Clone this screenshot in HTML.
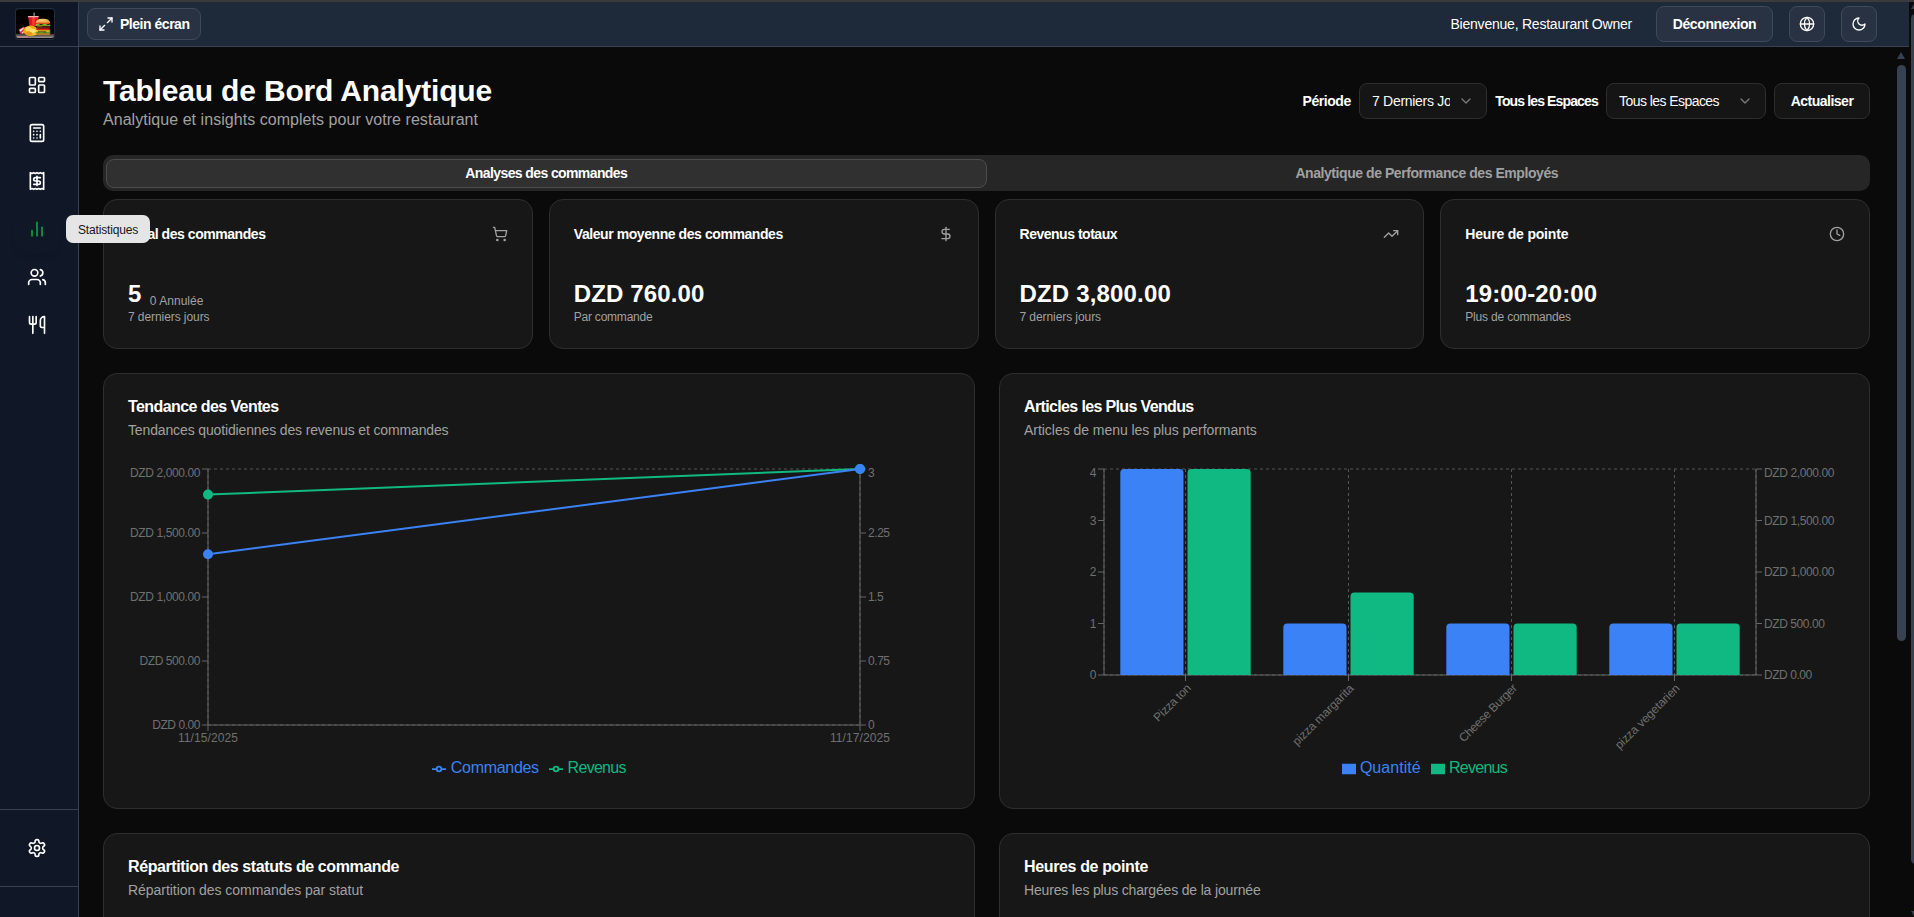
<!DOCTYPE html>
<html lang="fr"><head><meta charset="utf-8"><title>Tableau de Bord Analytique</title>
<style>
*{box-sizing:border-box}
html,body{margin:0;padding:0}
body{width:1914px;height:917px;overflow:hidden;background:#0a0a0a;color:#fafafa;
 font-family:"Liberation Sans",sans-serif;font-size:14px;position:relative}
span{white-space:pre}
.ico{display:block;flex:none}
#chrome{position:absolute;left:0;top:0;width:1914px;height:2px;background:#3b3a3d;z-index:9}
aside{position:absolute;left:0;top:2px;width:79px;height:915px;background:#101828;border-right:1px solid #364153}
aside .logo{position:absolute;left:0;top:0;width:78px;height:45px;border-bottom:1px solid #364153}
aside nav a{position:absolute;left:13px;width:48px;height:48px;display:flex;align-items:center;justify-content:center;border-radius:12px}
aside nav a.on{box-shadow:0 6px 6px -4px rgba(0,0,0,.16);border-radius:16px}
aside .foot{position:absolute;left:0;top:807px;width:78px;height:78px;border-top:1px solid #364153;border-bottom:1px solid #364153;
 display:flex;align-items:center;justify-content:center;padding-right:4px}
header{position:absolute;left:79px;top:2px;width:1830px;height:45px;background:#1e2939;border-bottom:1px solid #364153}
.hbtn{position:absolute;top:4px;height:36px;border:1px solid #404957;background:#283242;border-radius:8px;
 display:flex;align-items:center;justify-content:center;font-weight:700;color:#fff;font-size:14px;line-height:20px}
main{position:absolute;left:79px;top:47px;width:1830px;height:870px;overflow:hidden}
h1{position:absolute;left:24px;top:24px;margin:0;font-size:30px;line-height:36px;font-weight:700;color:#fff}
h1 span{position:relative;top:2px}
.sub{position:absolute;left:24px;top:60px;margin:0;font-size:16px;line-height:24px;color:#a1a1a1}
.sub span{position:relative;top:1px}
.ctl{position:absolute;top:36px;height:36px;display:flex;align-items:center;font-size:14px;line-height:20px}
.lbl{font-weight:700;color:#fff}
.sel,.btn{border:1px solid #2e2e2e;background:#151515;border-radius:8px;color:#fafafa}
.sel{padding:0 12px;justify-content:space-between}
.sel .v{overflow:hidden;display:block}
.btn{justify-content:center;font-weight:700;color:#fff}
.tabs{position:absolute;left:24px;top:108px;width:1767px;height:36px;background:#262626;border-radius:10px;padding:3px;display:flex;align-items:center}
.tab{flex:1;height:29px;display:flex;align-items:center;justify-content:center;font-size:14px;line-height:20px;font-weight:700;color:#a1a1a1;border:1px solid transparent;border-radius:8px}
.tab.on{background:#303030;border-color:#4c4c4c;color:#fff}
.card{position:absolute;background:#171717;border:1px solid #2e2e2e;border-radius:14px}
.stat .t{position:absolute;left:24px;top:24px;font-size:14px;line-height:20px;font-weight:700;color:#fff}
.stat .ico{position:absolute;right:24px;top:26px}
.stat .v{position:absolute;left:24px;top:76px;font-size:24px;line-height:32px;font-weight:700;color:#fff;display:flex;align-items:baseline}
.stat .v span{position:relative;top:2px}
.stat .v small{font-size:12px;font-weight:400;color:#a1a1a1;margin-left:9px}
.stat .v small span{top:5px}
.stat .d{position:absolute;left:24px;top:108px;font-size:12px;line-height:16px;color:#a1a1a1}
.stat .d span{position:relative;top:1px}
.ct{position:absolute;left:24px;top:24px;font-size:16px;line-height:16px;font-weight:700;color:#fff}
.ct span{position:relative;top:1px}
.cd{position:absolute;left:24px;top:46px;font-size:14px;line-height:20px;color:#a1a1a1}
.chart{position:absolute;left:24px;top:90px}
.chart text{font-family:"Liberation Sans",sans-serif}
.legend{position:absolute;top:381px;height:24px;display:flex;align-items:center;font-size:16px;line-height:24px}
.legend svg{margin-right:4px;position:relative;top:2px}
.legend span{position:relative;top:1px}
#tip{position:absolute;left:66px;top:215px;width:84px;height:28px;background:#e5e5e5;color:#171717;border-radius:7px;
 font-size:12px;line-height:16px;display:flex;align-items:center;justify-content:center;z-index:5}
#sb1{position:absolute;left:1894px;top:47px;width:15px;height:870px;background:#0a0a0a}
#sb2{position:absolute;left:1909px;top:2px;width:5px;height:915px;background:#0a0a0a}
.thumb{position:absolute;background:#384152;border-radius:5px}
.arr{position:absolute;width:0;height:0;border-left:4.5px solid transparent;border-right:4.5px solid transparent}
</style></head>
<body>
<div id="chrome"></div>
<aside>
<div class="logo"><svg width="40" height="32" viewBox="0 0 40 32" style="position:absolute;left:15px;top:6px">
<defs><linearGradient id="fl" x1="0" y1="0" x2="0" y2="1"><stop offset="0" stop-color="#3a2f2a"/><stop offset="1" stop-color="#a0958f"/></linearGradient>
<radialGradient id="bun" cx=".4" cy=".3" r=".8"><stop offset="0" stop-color="#f7d27c"/><stop offset="1" stop-color="#dd9428"/></radialGradient>
<clipPath id="lc"><rect x="1" y="2" width="38" height="28" rx="2.500"/></clipPath></defs>
<rect x=".5" y=".5" width="39" height="31" rx="3.500" fill="#000" stroke="#1f2b3e" stroke-width="1.3"/>
<g clip-path="url(#lc)">
<rect x="1" y="2" width="38" height="28" fill="#000"/>
<rect x="1" y="25.800" width="38" height="4.200" fill="url(#fl)"/>
<rect x="2" y="28" width="11" height="2" fill="#b98a93" opacity=".7"/>
<rect x="18.500" y="4.600" width="1.300" height="4" fill="#8a8a8a"/>
<path d="M13.200 8.800h10.200l-1.200 9.200h-7.800z" fill="#e0161f"/><path d="M17 9h3l-.6 8.800h-2z" fill="#f2402f"/>
<rect x="12.900" y="8.100" width="10.800" height="1.200" rx=".5" fill="#f1b9bc"/>
<path d="M3.600 21.500l5-3 2.300 1.200-1.500 6.500-4.300-.4z" fill="#d7283f"/><path d="M4.500 22l3.600-2.200.9.600-3.400 3.300zM6.500 25l2.800-3 .2 1.500-1.800 2z" fill="#f8e4e7"/>
<ellipse cx="15.800" cy="22.700" rx="7.300" ry="5.300" fill="#f0a91b"/>
<ellipse cx="13.500" cy="21" rx="3.200" ry="2.300" fill="#ffd85a"/><ellipse cx="18" cy="23" rx="3" ry="2.200" fill="#ffe178"/><ellipse cx="14" cy="25.500" rx="3.400" ry="1.700" fill="#e6941a"/><ellipse cx="19.500" cy="25.800" rx="2.400" ry="1.400" fill="#f7c437"/>
<path d="M20.600 15.300c0-3.300 3.200-4.600 7.300-4.600s7.300 1.300 7.300 4.600z" fill="url(#bun)"/>
<rect x="21.500" y="14.700" width="12.800" height="1.300" rx=".6" fill="#e4481d"/>
<path d="M20.600 16.300q1.800-1 3.600 0t3.700 0 3.700 0 3.700 0v1.700h-14.700z" fill="#84bd2e"/>
<rect x="21" y="17.700" width="14" height="2.900" rx="1.200" fill="#4e2410"/><rect x="22" y="18.300" width="5" height="1" rx=".5" fill="#8a5a1c"/>
<rect x="21.300" y="20.500" width="13.400" height="1.800" rx=".8" fill="#e3221a"/>
<path d="M20.800 22.200h14.400v1.400l-2.400.7-2-.7h-10z" fill="#f7d420"/>
<path d="M20.600 23.900q1.800.8 3.600 0t3.700 0 3.700 0 3.700 0v1.500h-14.700z" fill="#5b9a28"/>
<path d="M21 25.200h14v.6a1 1 0 0 1-1 1h-12a1 1 0 0 1-1-1z" fill="#d58b2b"/>
</g></svg></div>
<nav>
<a style="top:59px"><svg class="ico" width="20" height="20" viewBox="0 0 24 24" fill="none" stroke="#fff" stroke-width="2" stroke-linecap="round" stroke-linejoin="round" style=""><rect width="7" height="9" x="3" y="3" rx="1"/><rect width="7" height="5" x="14" y="3" rx="1"/><rect width="7" height="9" x="14" y="12" rx="1"/><rect width="7" height="5" x="3" y="16" rx="1"/></svg></a>
<a style="top:107px"><svg class="ico" width="20" height="20" viewBox="0 0 24 24" fill="none" stroke="#fff" stroke-width="2" stroke-linecap="round" stroke-linejoin="round" style=""><rect width="16" height="20" x="4" y="2" rx="2"/><line x1="8" x2="16" y1="6" y2="6"/><line x1="16" x2="16" y1="14" y2="18"/><path d="M16 10h.01"/><path d="M12 10h.01"/><path d="M8 10h.01"/><path d="M12 14h.01"/><path d="M8 14h.01"/><path d="M12 18h.01"/><path d="M8 18h.01"/></svg></a>
<a style="top:155px"><svg class="ico" width="20" height="20" viewBox="0 0 24 24" fill="none" stroke="#fff" stroke-width="2" stroke-linecap="round" stroke-linejoin="round" style=""><path d="M4 2v20l2-1 2 1 2-1 2 1 2-1 2 1 2-1 2 1V2l-2 1-2-1-2 1-2-1-2 1-2-1-2 1Z"/><path d="M16 8h-6a2 2 0 1 0 0 4h4a2 2 0 1 1 0 4H8"/><path d="M12 17.5v-11"/></svg></a>
<a class="on" style="top:203px"><svg class="ico" width="20" height="20" viewBox="0 0 24 24" fill="none" stroke="#00a63e" stroke-width="2" stroke-linecap="round" stroke-linejoin="round" style=""><line x1="18" x2="18" y1="20" y2="10"/><line x1="12" x2="12" y1="20" y2="4"/><line x1="6" x2="6" y1="20" y2="14"/></svg></a>
<a style="top:251px"><svg class="ico" width="20" height="20" viewBox="0 0 24 24" fill="none" stroke="#fff" stroke-width="2" stroke-linecap="round" stroke-linejoin="round" style=""><path d="M16 21v-2a4 4 0 0 0-4-4H6a4 4 0 0 0-4 4v2"/><circle cx="9" cy="7" r="4"/><path d="M22 21v-2a4 4 0 0 0-3-3.87"/><path d="M16 3.13a4 4 0 0 1 0 7.75"/></svg></a>
<a style="top:299px"><svg class="ico" width="20" height="20" viewBox="0 0 24 24" fill="none" stroke="#fff" stroke-width="2" stroke-linecap="round" stroke-linejoin="round" style=""><path d="M3 2v7c0 1.1.9 2 2 2h4a2 2 0 0 0 2-2V2"/><path d="M7 2v20"/><path d="M21 15V2a5 5 0 0 0-5 5v6c0 1.1.9 2 2 2h3Zm0 0v7"/></svg></a>
</nav>
<div class="foot"><svg class="ico" width="20" height="20" viewBox="0 0 24 24" fill="none" stroke="#fff" stroke-width="2" stroke-linecap="round" stroke-linejoin="round" style=""><path d="M12.22 2h-.44a2 2 0 0 0-2 2v.18a2 2 0 0 1-1 1.73l-.43.25a2 2 0 0 1-2 0l-.15-.08a2 2 0 0 0-2.73.73l-.22.38a2 2 0 0 0 .73 2.73l.15.1a2 2 0 0 1 1 1.72v.51a2 2 0 0 1-1 1.74l-.15.09a2 2 0 0 0-.73 2.73l.22.38a2 2 0 0 0 2.73.73l.15-.08a2 2 0 0 1 2 0l.43.25a2 2 0 0 1 1 1.73V20a2 2 0 0 0 2 2h.44a2 2 0 0 0 2-2v-.18a2 2 0 0 1 1-1.73l.43-.25a2 2 0 0 1 2 0l.15.08a2 2 0 0 0 2.73-.73l.22-.39a2 2 0 0 0-.73-2.73l-.15-.08a2 2 0 0 1-1-1.74v-.5a2 2 0 0 1 1-1.74l.15-.09a2 2 0 0 0 .73-2.73l-.22-.38a2 2 0 0 0-2.73-.73l-.15.08a2 2 0 0 1-2 0l-.43-.25a2 2 0 0 1-1-1.73V4a2 2 0 0 0-2-2z"/><circle cx="12" cy="12" r="3"/></svg></div>
</aside>
<header>
<div class="hbtn" style="left:8px;top:6px;height:32px;width:114px;justify-content:flex-start;padding-left:10px"><svg class="ico" width="16" height="16" viewBox="0 0 24 24" fill="none" stroke="#fff" stroke-width="2" stroke-linecap="round" stroke-linejoin="round" style="margin-right:6px"><polyline points="15 3 21 3 21 9"/><polyline points="9 21 3 21 3 15"/><line x1="21" x2="14" y1="3" y2="10"/><line x1="3" x2="10" y1="21" y2="14"/></svg><span style="letter-spacing:-0.473px;">Plein écran</span></div>
<div style="position:absolute;left:1371.5px;top:12px;font-size:14px;line-height:20px;color:#fff"><span style="letter-spacing:-0.225px;">Bienvenue, Restaurant Owner</span></div>
<div class="hbtn" style="left:1577px;width:117px"><span style="letter-spacing:-0.401px;">Déconnexion</span></div>
<div class="hbtn" style="left:1710px;width:36px"><svg class="ico" width="16" height="16" viewBox="0 0 24 24" fill="none" stroke="#fff" stroke-width="2" stroke-linecap="round" stroke-linejoin="round" style=""><circle cx="12" cy="12" r="10"/><path d="M12 2a14.5 14.5 0 0 0 0 20 14.5 14.5 0 0 0 0-20"/><path d="M2 12h20"/></svg></div>
<div class="hbtn" style="left:1762px;width:36px"><svg class="ico" width="16" height="16" viewBox="0 0 24 24" fill="none" stroke="#fff" stroke-width="2" stroke-linecap="round" stroke-linejoin="round" style=""><path d="M12 3a6 6 0 0 0 9 9 9 9 0 1 1-9-9Z"/></svg></div>
</header>
<main>
<h1><span style="letter-spacing:-0.169px;">Tableau de Bord Analytique</span></h1>
<p class="sub"><span style="letter-spacing:0.045px;">Analytique et insights complets pour votre restaurant</span></p>
<div class="ctl lbl" style="left:1223.5px"><span style="letter-spacing:-0.437px;">Période</span></div>
<div class="ctl sel" style="left:1280px;width:128px"><span class="v" style="width:78px"><span style="letter-spacing:-0.294px;">7 Derniers Jours</span></span><svg class="ico" width="16" height="16" viewBox="0 0 24 24" fill="none" stroke="#7a7a7a" stroke-width="2" stroke-linecap="round" stroke-linejoin="round" style=""><path d="m6 9 6 6 6-6"/></svg></div>
<div class="ctl lbl" style="left:1416.3px"><span style="letter-spacing:-0.873px;">Tous les Espaces</span></div>
<div class="ctl sel" style="left:1527px;width:160px"><span style="letter-spacing:-0.560px;">Tous les Espaces</span><svg class="ico" width="16" height="16" viewBox="0 0 24 24" fill="none" stroke="#7a7a7a" stroke-width="2" stroke-linecap="round" stroke-linejoin="round" style=""><path d="m6 9 6 6 6-6"/></svg></div>
<div class="ctl btn" style="left:1695px;width:96px"><span style="letter-spacing:-0.500px;">Actualiser</span></div>
<div class="tabs"><div class="tab on"><span style="letter-spacing:-0.604px;">Analyses des commandes</span></div><div class="tab"><span style="letter-spacing:-0.438px;">Analytique de Performance des Employés</span></div></div>
<section class="card stat" style="left:24px;top:152px;width:429.75px;height:150px">
<div class="t"><span style="letter-spacing:-0.448px;">Total des commandes</span></div><svg class="ico" width="16" height="16" viewBox="0 0 24 24" fill="none" stroke="#a1a1a1" stroke-width="2" stroke-linecap="round" stroke-linejoin="round" style=""><circle cx="8" cy="21" r="1"/><circle cx="19" cy="21" r="1"/><path d="M2.05 2.05h2l2.66 12.42a2 2 0 0 0 2 1.58h9.78a2 2 0 0 0 1.95-1.57l1.65-7.43H5.12"/></svg>
<div class="v"><span style="letter-spacing:-0.559px;">5</span><small><span style="letter-spacing:0.034px;">0 Annulée</span></small></div>
<div class="d"><span style="letter-spacing:-0.076px;">7 derniers jours</span></div></section><section class="card stat" style="left:469.75px;top:152px;width:429.75px;height:150px">
<div class="t"><span style="letter-spacing:-0.428px;">Valeur moyenne des commandes</span></div><svg class="ico" width="16" height="16" viewBox="0 0 24 24" fill="none" stroke="#a1a1a1" stroke-width="2" stroke-linecap="round" stroke-linejoin="round" style=""><line x1="12" x2="12" y1="2" y2="22"/><path d="M17 5H9.5a3.5 3.5 0 0 0 0 7h5a3.5 3.5 0 0 1 0 7H6"/></svg>
<div class="v"><span style="letter-spacing:0.129px;">DZD 760.00</span></div>
<div class="d"><span style="letter-spacing:-0.223px;">Par commande</span></div></section><section class="card stat" style="left:915.5px;top:152px;width:429.75px;height:150px">
<div class="t"><span style="letter-spacing:-0.482px;">Revenus totaux</span></div><svg class="ico" width="16" height="16" viewBox="0 0 24 24" fill="none" stroke="#a1a1a1" stroke-width="2" stroke-linecap="round" stroke-linejoin="round" style=""><polyline points="22 7 13.5 15.5 8.5 10.5 2 17"/><polyline points="16 7 22 7 22 13"/></svg>
<div class="v"><span style="letter-spacing:0.173px;">DZD 3,800.00</span></div>
<div class="d"><span style="letter-spacing:-0.076px;">7 derniers jours</span></div></section><section class="card stat" style="left:1361.25px;top:152px;width:429.75px;height:150px">
<div class="t"><span style="letter-spacing:-0.186px;">Heure de pointe</span></div><svg class="ico" width="16" height="16" viewBox="0 0 24 24" fill="none" stroke="#a1a1a1" stroke-width="2" stroke-linecap="round" stroke-linejoin="round" style=""><circle cx="12" cy="12" r="10"/><polyline points="12 6 12 12 16 14"/></svg>
<div class="v"><span style="letter-spacing:0.112px;">19:00-20:00</span></div>
<div class="d"><span style="letter-spacing:-0.184px;">Plus de commandes</span></div></section>
<section class="card" style="left:24px;top:326px;width:872px;height:436px">
<div class="ct"><span style="letter-spacing:-0.581px;">Tendance des Ventes</span></div>
<div class="cd"><span style="letter-spacing:-0.136px;">Tendances quotidiennes des revenus et commandes</span></div>
<svg class="chart" width="822" height="320" viewBox="0 0 822 320"><line x1="80" y1="5" x2="80" y2="261" stroke="#555" stroke-dasharray="3 3"/><line x1="732" y1="5" x2="732" y2="261" stroke="#555" stroke-dasharray="3 3"/><line x1="80" y1="5" x2="732" y2="5" stroke="#555" stroke-dasharray="3 3"/><line x1="80" y1="261" x2="732" y2="261" stroke="#555" stroke-dasharray="3 3"/><line x1="80" y1="261" x2="732" y2="261" stroke="#666"/><line x1="80" y1="5" x2="80" y2="261" stroke="#666"/><line x1="732" y1="5" x2="732" y2="261" stroke="#666"/><line x1="80" y1="261" x2="80" y2="267" stroke="#666"/><line x1="732" y1="261" x2="732" y2="267" stroke="#666"/><line x1="74" y1="5" x2="80" y2="5" stroke="#666"/><line x1="732" y1="5" x2="738" y2="5" stroke="#666"/><line x1="74" y1="69" x2="80" y2="69" stroke="#666"/><line x1="732" y1="69" x2="738" y2="69" stroke="#666"/><line x1="74" y1="133" x2="80" y2="133" stroke="#666"/><line x1="732" y1="133" x2="738" y2="133" stroke="#666"/><line x1="74" y1="197" x2="80" y2="197" stroke="#666"/><line x1="732" y1="197" x2="738" y2="197" stroke="#666"/><line x1="74" y1="261" x2="80" y2="261" stroke="#666"/><line x1="732" y1="261" x2="738" y2="261" stroke="#666"/><text x="72" y="12.8" text-anchor="end" font-size="12" fill="#707070" style="letter-spacing:-0.393px" >DZD 2,000.00</text><text x="740" y="12.8" text-anchor="start" font-size="12" fill="#707070" style="letter-spacing:-0.487px" >3</text><text x="72" y="73" text-anchor="end" font-size="12" fill="#707070" style="letter-spacing:-0.393px" >DZD 1,500.00</text><text x="740" y="73" text-anchor="start" font-size="12" fill="#707070" style="letter-spacing:-0.440px" >2.25</text><text x="72" y="137" text-anchor="end" font-size="12" fill="#707070" style="letter-spacing:-0.393px" >DZD 1,000.00</text><text x="740" y="137" text-anchor="start" font-size="12" fill="#707070" style="letter-spacing:-0.562px" >1.5</text><text x="72" y="201" text-anchor="end" font-size="12" fill="#707070" style="letter-spacing:-0.420px" >DZD 500.00</text><text x="740" y="201" text-anchor="start" font-size="12" fill="#707070" style="letter-spacing:-0.440px" >0.75</text><text x="72" y="265" text-anchor="end" font-size="12" fill="#707070" style="letter-spacing:-0.445px" >DZD 0.00</text><text x="740" y="265" text-anchor="start" font-size="12" fill="#707070" style="letter-spacing:-0.487px" >0</text><text x="80" y="277.5" text-anchor="middle" font-size="12" fill="#707070" style="letter-spacing:0.103px" >11/15/2025</text><text x="732" y="277.5" text-anchor="middle" font-size="12" fill="#707070" style="letter-spacing:0.103px" >11/17/2025</text><path d="M80,30.6L732,5" stroke="#10b981" stroke-width="2" fill="none"/><circle cx="80" cy="30.6" r="4" fill="#10b981" stroke="#10b981" stroke-width="2"/><circle cx="732" cy="5" r="4" fill="#10b981" stroke="#10b981" stroke-width="2"/><path d="M80,90.33L732,5" stroke="#3b82f6" stroke-width="2" fill="none"/><circle cx="80" cy="90.33" r="4" fill="#3b82f6" stroke="#3b82f6" stroke-width="2"/><circle cx="732" cy="5" r="4" fill="#3b82f6" stroke="#3b82f6" stroke-width="2"/></svg>
<div class="legend" style="left:327.8px;color:#3b82f6"><svg width="14" height="14" viewBox="0 0 32 32"><path stroke-width="4" fill="none" stroke="#3b82f6" d="M0,16h10.666666666666666A5.333333333333333,5.333333333333333,0,1,1,21.333333333333332,16H32M21.333333333333332,16A5.333333333333333,5.333333333333333,0,1,1,10.666666666666666,16"/></svg><span style="letter-spacing:-0.300px;margin-left:1px;margin-right:10.4px">Commandes</span><svg width="14" height="14" viewBox="0 0 32 32"><path stroke-width="4" fill="none" stroke="#10b981" d="M0,16h10.666666666666666A5.333333333333333,5.333333333333333,0,1,1,21.333333333333332,16H32M21.333333333333332,16A5.333333333333333,5.333333333333333,0,1,1,10.666666666666666,16"/></svg><span style="letter-spacing:-0.708px;margin-left:0.4px;color:#10b981">Revenus</span></div>
</section>
<section class="card" style="left:920px;top:326px;width:871px;height:436px">
<div class="ct"><span style="letter-spacing:-0.640px;">Articles les Plus Vendus</span></div>
<div class="cd"><span style="letter-spacing:-0.038px;">Articles de menu les plus performants</span></div>
<svg class="chart" width="822" height="320" viewBox="0 0 822 320"><line x1="80.00" y1="5" x2="80.00" y2="211" stroke="#555" stroke-dasharray="3 3"/><line x1="161.50" y1="5" x2="161.50" y2="211" stroke="#555" stroke-dasharray="3 3"/><line x1="324.50" y1="5" x2="324.50" y2="211" stroke="#555" stroke-dasharray="3 3"/><line x1="487.50" y1="5" x2="487.50" y2="211" stroke="#555" stroke-dasharray="3 3"/><line x1="650.50" y1="5" x2="650.50" y2="211" stroke="#555" stroke-dasharray="3 3"/><line x1="732.00" y1="5" x2="732.00" y2="211" stroke="#555" stroke-dasharray="3 3"/><line x1="80" y1="5" x2="732" y2="5" stroke="#555" stroke-dasharray="3 3"/><line x1="80" y1="211" x2="732" y2="211" stroke="#555" stroke-dasharray="3 3"/><line x1="80" y1="211" x2="732" y2="211" stroke="#666"/><line x1="80" y1="5" x2="80" y2="211" stroke="#666"/><line x1="732" y1="5" x2="732" y2="211" stroke="#666"/><line x1="161.50" y1="211" x2="161.50" y2="217" stroke="#666"/><line x1="324.50" y1="211" x2="324.50" y2="217" stroke="#666"/><line x1="487.50" y1="211" x2="487.50" y2="217" stroke="#666"/><line x1="650.50" y1="211" x2="650.50" y2="217" stroke="#666"/><line x1="74" y1="5" x2="80" y2="5" stroke="#666"/><line x1="732" y1="5" x2="738" y2="5" stroke="#666"/><text x="72" y="12.8" text-anchor="end" font-size="12" fill="#707070" style="letter-spacing:-0.487px" >4</text><text x="740" y="12.8" text-anchor="start" font-size="12" fill="#707070" style="letter-spacing:-0.393px" >DZD 2,000.00</text><line x1="74" y1="56.5" x2="80" y2="56.5" stroke="#666"/><line x1="732" y1="56.5" x2="738" y2="56.5" stroke="#666"/><text x="72" y="60.5" text-anchor="end" font-size="12" fill="#707070" style="letter-spacing:-0.487px" >3</text><text x="740" y="60.5" text-anchor="start" font-size="12" fill="#707070" style="letter-spacing:-0.393px" >DZD 1,500.00</text><line x1="74" y1="108" x2="80" y2="108" stroke="#666"/><line x1="732" y1="108" x2="738" y2="108" stroke="#666"/><text x="72" y="112" text-anchor="end" font-size="12" fill="#707070" style="letter-spacing:-0.487px" >2</text><text x="740" y="112" text-anchor="start" font-size="12" fill="#707070" style="letter-spacing:-0.393px" >DZD 1,000.00</text><line x1="74" y1="159.5" x2="80" y2="159.5" stroke="#666"/><line x1="732" y1="159.5" x2="738" y2="159.5" stroke="#666"/><text x="72" y="163.5" text-anchor="end" font-size="12" fill="#707070" style="letter-spacing:-0.487px" >1</text><text x="740" y="163.5" text-anchor="start" font-size="12" fill="#707070" style="letter-spacing:-0.420px" >DZD 500.00</text><line x1="74" y1="211" x2="80" y2="211" stroke="#666"/><line x1="732" y1="211" x2="738" y2="211" stroke="#666"/><text x="72" y="215" text-anchor="end" font-size="12" fill="#707070" style="letter-spacing:-0.487px" >0</text><text x="740" y="215" text-anchor="start" font-size="12" fill="#707070" style="letter-spacing:-0.445px" >DZD 0.00</text><path d="M96.30,211V9.00a4,4 0 0 1 4,-4h55.20a4,4 0 0 1 4,4V211z" fill="#3b82f6"/><path d="M163.50,211V9.00a4,4 0 0 1 4,-4h55.20a4,4 0 0 1 4,4V211z" fill="#10b981"/><path d="M259.30,211V163.50a4,4 0 0 1 4,-4h55.20a4,4 0 0 1 4,4V211z" fill="#3b82f6"/><path d="M326.50,211V132.60a4,4 0 0 1 4,-4h55.20a4,4 0 0 1 4,4V211z" fill="#10b981"/><path d="M422.30,211V163.50a4,4 0 0 1 4,-4h55.20a4,4 0 0 1 4,4V211z" fill="#3b82f6"/><path d="M489.50,211V163.50a4,4 0 0 1 4,-4h55.20a4,4 0 0 1 4,4V211z" fill="#10b981"/><path d="M585.30,211V163.50a4,4 0 0 1 4,-4h55.20a4,4 0 0 1 4,4V211z" fill="#3b82f6"/><path d="M652.50,211V163.50a4,4 0 0 1 4,-4h55.20a4,4 0 0 1 4,4V211z" fill="#10b981"/><g transform="rotate(-45 161.50 219)"><text x="161.50" y="227.5" text-anchor="end" font-size="12" fill="#707070" style="letter-spacing:-0.262px" >Pizza ton</text></g><g transform="rotate(-45 324.50 219)"><text x="324.50" y="227.5" text-anchor="end" font-size="12" fill="#707070" style="letter-spacing:-0.069px" >pizza margarita</text></g><g transform="rotate(-45 487.50 219)"><text x="487.50" y="227.5" text-anchor="end" font-size="12" fill="#707070" style="letter-spacing:-0.363px" >Cheese Burger</text></g><g transform="rotate(-45 650.50 219)"><text x="650.50" y="227.5" text-anchor="end" font-size="12" fill="#707070" style="letter-spacing:-0.087px" >pizza vegetarien</text></g></svg>
<div class="legend" style="left:341.9px;color:#3b82f6"><svg width="14" height="14" viewBox="0 0 32 32"><path fill="#3b82f6" d="M0,4h32v24h-32z"/></svg><span style="letter-spacing:0.039px;margin-right:10.2px">Quantité</span><svg width="14" height="14" viewBox="0 0 32 32"><path fill="#10b981" d="M0,4h32v24h-32z"/></svg><span style="letter-spacing:-0.708px;color:#10b981">Revenus</span></div>
</section>
<section class="card" style="left:24px;top:786px;width:872px;height:300px">
<div class="ct"><span style="letter-spacing:-0.411px;">Répartition des statuts de commande</span></div>
<div class="cd"><span style="letter-spacing:-0.044px;">Répartition des commandes par statut</span></div></section>
<section class="card" style="left:920px;top:786px;width:871px;height:300px">
<div class="ct"><span style="letter-spacing:-0.363px;">Heures de pointe</span></div>
<div class="cd"><span style="letter-spacing:-0.166px;">Heures les plus chargées de la journée</span></div></section>
</main>
<div id="sb1"><div class="arr" style="left:3px;top:5px;border-bottom:7px solid #384152"></div><div class="thumb" style="left:3px;top:18px;width:9px;height:576px"></div></div>
<div id="sb2"><div class="arr" style="left:2px;top:0px;border-bottom:7px solid #384152"></div><div class="thumb" style="left:2px;top:12px;width:9px;height:850px"></div><div class="arr" style="left:2px;top:909px;border-top:7px solid #384152"></div></div>
<div id="tip"><span style="letter-spacing:-0.171px;position:relative;top:1px">Statistiques</span></div>
</body></html>
